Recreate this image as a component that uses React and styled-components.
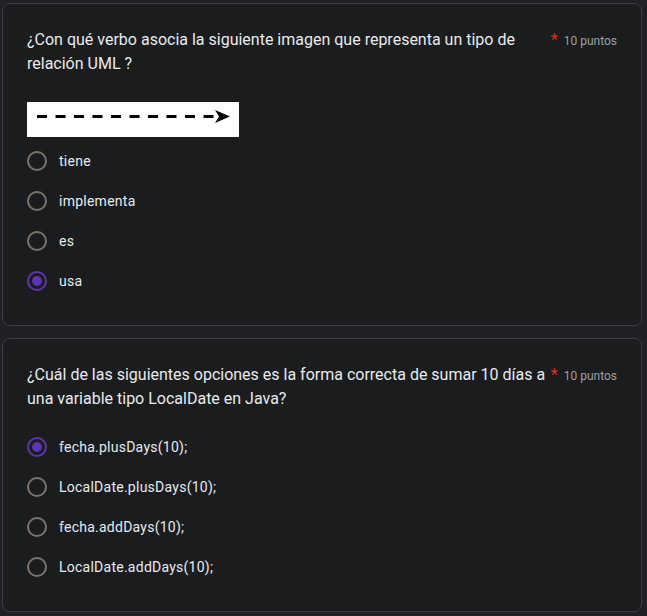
import React, { useState } from 'react';
import styled, { createGlobalStyle } from 'styled-components';

const GlobalStyle = createGlobalStyle`
  html, body {
    margin: 0;
    padding: 0;
    background: #202124;
  }
  body {
    font-family: Roboto, "Noto Sans", Arial, sans-serif;
    -webkit-font-smoothing: antialiased;
  }
`;

const questions = [
  {
    id: 'q1',
    text: '¿Con qué verbo asocia la siguiente imagen que representa un tipo de relación UML ?',
    points: 10,
    image: true,
    options: ['tiene', 'implementa', 'es', 'usa'],
    selected: 3,
  },
  {
    id: 'q2',
    text: '¿Cuál de las siguientes opciones es la forma correcta de sumar 10 días a una variable tipo LocalDate en Java?',
    points: 10,
    image: false,
    options: [
      'fecha.plusDays(10);',
      'LocalDate.plusDays(10);',
      'fecha.addDays(10);',
      'LocalDate.addDays(10);',
    ],
    selected: 0,
  },
];

const DashedArrow = () => (
  <svg width="212" height="35" viewBox="0 0 212 35">
    <line
      x1="10"
      y1="14.5"
      x2="194"
      y2="14.5"
      stroke="#000"
      strokeWidth="3"
      strokeDasharray="10 8.5"
    />
    <path d="M188 8 L203 14.5 L188 21 L192 14.5 Z" fill="#000" />
  </svg>
);

function Question({ q }) {
  const [selected, setSelected] = useState(q.selected);

  return (
    <Card>
      <Header>
        <Title>{q.text}</Title>
        <Required>*</Required>
        <Points>{q.points} puntos</Points>
      </Header>
      {q.image && (
        <ImageBox>
          <DashedArrow />
        </ImageBox>
      )}
      <Options $afterImage={q.image}>
        {q.options.map((opt, i) => (
          <Option key={opt} onClick={() => setSelected(i)}>
            <Radio $checked={selected === i} />
            <Label>{opt}</Label>
          </Option>
        ))}
      </Options>
    </Card>
  );
}

export default function App() {
  return (
    <Page>
      <GlobalStyle />
      {questions.map(q => (
        <Question key={q.id} q={q} />
      ))}
    </Page>
  );
}

const Page = styled.div`
  width: 647px;
  min-height: 616px;
  padding: 3px 5px 0 2px;
  box-sizing: border-box;
  display: flex;
  flex-direction: column;
  gap: 12px;
`;

const Card = styled.div`
  background: #1b1c1e;
  border: 1px solid #3c3d40;
  border-radius: 8px;
  padding: 24px;
  color: #e8eaed;
`;

const Header = styled.div`
  display: flex;
  align-items: flex-start;
`;

const Title = styled.div`
  flex: 0 1 522px;
  font-size: 16px;
  line-height: 24px;
  color: #e8eaed;
`;

const Required = styled.span`
  flex-shrink: 0;
  color: #d93025;
  font-size: 16px;
  line-height: 24px;
  margin-left: 2px;
  width: 13px;
`;

const Points = styled.span`
  flex-shrink: 0;
  white-space: nowrap;
  font-size: 12px;
  line-height: 24px;
  color: #9aa0a6;
  margin-top: 1px;
`;

const ImageBox = styled.div`
  width: 212px;
  height: 35px;
  background: #fff;
  margin-top: 26px;
  svg {
    display: block;
  }
`;

const Options = styled.div`
  display: flex;
  flex-direction: column;
  margin-top: ${p => (p.$afterImage ? '4px' : '16px')};
`;

const Option = styled.label`
  display: flex;
  align-items: center;
  height: 40px;
  cursor: pointer;
`;

const Radio = styled.span`
  width: 20px;
  height: 20px;
  box-sizing: border-box;
  border-radius: 50%;
  border: 2px solid ${p => (p.$checked ? '#5e35b1' : '#7b746c')};
  display: flex;
  align-items: center;
  justify-content: center;
  &::after {
    content: '';
    width: 10px;
    height: 10px;
    border-radius: 50%;
    background: #5e35b1;
    display: ${p => (p.$checked ? 'block' : 'none')};
  }
`;

const Label = styled.span`
  margin-left: 12px;
  font-size: 14px;
  line-height: 20px;
  letter-spacing: 0.25px;
  color: #e8eaed;
`;
